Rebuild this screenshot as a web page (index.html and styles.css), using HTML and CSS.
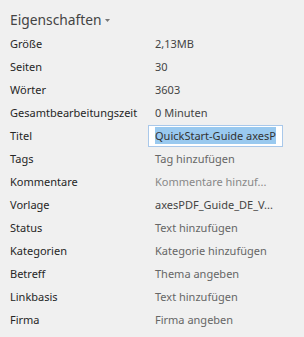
FILE: index.html
```
<!DOCTYPE html>
<html lang="de">
<head>
<meta charset="utf-8">
<link rel="stylesheet" href="styles.css">
</head>
<body>
<div class="panel">
  <div class="header">
    <span class="title">Eigenschaften</span>
    <svg class="caret" width="5" height="3" viewBox="0 0 5 3"><path d="M0 0H5L2.5 3Z" fill="#777"/></svg>
  </div>
  <div class="props">
    <div class="label">Größe</div><div class="value">2,13MB</div>
    <div class="label">Seiten</div><div class="value">30</div>
    <div class="label">Wörter</div><div class="value">3603</div>
    <div class="label">Gesamtbearbeitungszeit</div><div class="value">0 Minuten</div>
    <div class="label">Titel</div><div class="value"><div class="edit"><span class="sel">QuickStart-Guide axesP</span></div></div>
    <div class="label">Tags</div><div class="value ph">Tag hinzufügen</div>
    <div class="label">Kommentare</div><div class="value ph light">Kommentare hinzuf...</div>
    <div class="label">Vorlage</div><div class="value">axesPDF_Guide_DE_V...</div>
    <div class="label">Status</div><div class="value ph">Text hinzufügen</div>
    <div class="label">Kategorien</div><div class="value ph">Kategorie hinzufügen</div>
    <div class="label">Betreff</div><div class="value ph">Thema angeben</div>
    <div class="label">Linkbasis</div><div class="value ph">Text hinzufügen</div>
    <div class="label">Firma</div><div class="value ph">Firma angeben</div>
  </div>
</div>
</body>
</html>
```
FILE: styles.css
```
html, body {
  margin: 0;
  padding: 0;
  background: #f0f0f0;
}
.panel {
  width: 304px;
  height: 337px;
  font-family: "Noto Sans", "Open Sans", sans-serif;
  color: #262626;
  overflow: hidden;
}
.header {
  display: flex;
  align-items: center;
  gap: 3px;
  padding: 7px 0 0 10px;
  height: 24px;
}
.title {
  font-size: 13.8px;
  color: #444;
}
.caret {
  margin-top: 2px;
}
.props {
  display: grid;
  grid-template-columns: 145px 1fr;
  grid-auto-rows: 23px;
  padding: 1px 0 0 10px;
  font-size: 11px;
  align-items: center;
}
.value {
  color: #444;
  white-space: nowrap;
}
.ph {
  color: #666;
}
.light {
  color: #888;
}
.edit {
  margin-left: -7px;
  width: 121px;
  height: 20px;
  border: 1px solid #a9c8ea;
  background: #fff;
  padding: 0 6px;
  display: flex;
  align-items: center;
  overflow: hidden;
}
.sel {
  background: #99c9ef;
  color: #333;
  white-space: nowrap;
  line-height: 17px;
}
```
